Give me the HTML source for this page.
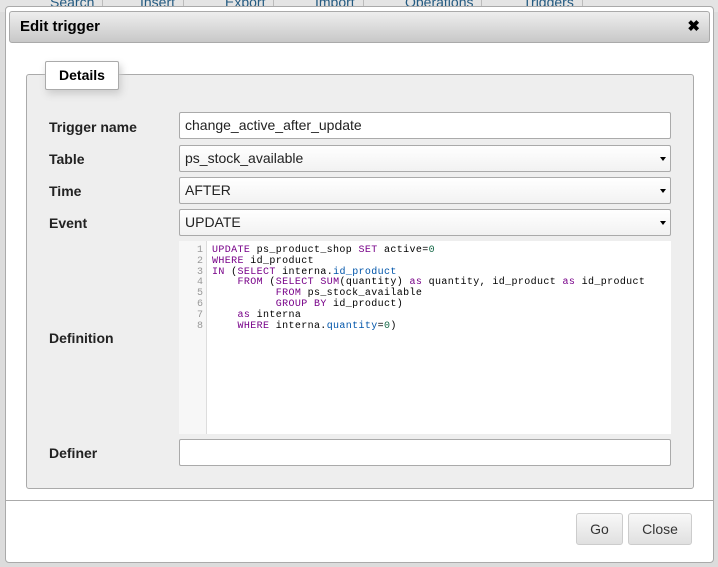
<!DOCTYPE html>
<html><head><style>
body{margin:0;width:718px;height:567px;background:#dcdcdc;font-family:"Liberation Sans",sans-serif;position:relative;overflow:hidden}
.top{position:absolute;left:0;top:0;width:718px;height:12px;background:#e4e4e4}
.tab{position:absolute;top:-6px;font-size:14px;color:#235a81;height:14px;border-right:1px solid #bbb;padding-right:8px}
.dlg{position:absolute;left:5px;top:6px;width:707px;height:555px;background:#fff;border:1px solid #aaa;border-radius:4px}
.title{position:absolute;left:3px;top:4px;width:699px;height:30px;border:1px solid #aaa;border-radius:3px;background:linear-gradient(#eee,#c8c8c8);font-weight:bold;font-size:15px;line-height:30px}
.title span{position:absolute;left:10px}
.title b{position:absolute;right:9px;font-size:15px}
.fs{position:absolute;left:20px;top:67px;width:666px;height:413px;background:#eee;border:1px solid #aaa;border-radius:3px}
.lg{position:absolute;left:39px;top:54px;width:72px;height:27px;background:#fff;border:1px solid #aaa;border-radius:2px;box-shadow:2px 4px 8px #ccc;font-weight:bold;font-size:14px;line-height:27px;text-align:center}
.lbl{position:absolute;left:43px;font-weight:bold;font-size:14px;color:#222}
.in{position:absolute;left:173px;border:1px solid #aaa;border-radius:2px;background:#fff;font-size:14px;line-height:25px;padding-left:5px;box-sizing:border-box;width:492px;height:27px;color:#222}
.sel{background:linear-gradient(#fff,#f2f2f2)}
.sel:after{content:"";position:absolute;right:4px;top:11px;border:3px solid transparent;border-top:4px solid #000}
.code{position:absolute;left:173px;top:234px;width:492px;height:193px;background:#fff;font-family:"Liberation Mono",monospace;font-size:10px;line-height:10.8px}
.gut{position:absolute;left:0;top:0;width:28px;height:193px;background:#f7f7f7;border-right:1px solid #ddd;color:#999;text-align:right;padding-top:5px;box-sizing:border-box;padding-right:3px}
.txt{position:absolute;left:33px;top:5px;white-space:pre;color:#000;letter-spacing:0.37px}
.k{color:#708}.n{color:#164}.v{color:#05a}
.sep{position:absolute;left:0;top:493px;width:707px;border-top:1px solid #aaa}
.btn{position:absolute;top:506px;height:30px;border:1px solid #ccc;border-radius:3px;background:linear-gradient(#f8f8f8,#e0e0e0);font-size:14px;line-height:30px;text-align:center;color:#333}
</style></head><body>
<div class="top">
<div class="tab" style="left:50px">Search</div>
<div class="tab" style="left:140px">Insert</div>
<div class="tab" style="left:225px">Export</div>
<div class="tab" style="left:315px">Import</div>
<div class="tab" style="left:405px">Operations</div>
<div class="tab" style="left:523px">Triggers</div>
</div>
<div class="dlg">
<div class="title"><span>Edit trigger</span><b>✖</b></div>
<div class="fs"></div>
<div class="lg">Details</div>
<div class="lbl" style="top:112px">Trigger name</div>
<div class="in" style="top:105px">change_active_after_update</div>
<div class="lbl" style="top:144px">Table</div>
<div class="in sel" style="top:138px">ps_stock_available</div>
<div class="lbl" style="top:176px">Time</div>
<div class="in sel" style="top:170px">AFTER</div>
<div class="lbl" style="top:208px">Event</div>
<div class="in sel" style="top:202px">UPDATE</div>
<div class="lbl" style="top:323px">Definition</div>
<div class="code"><div class="gut">1<br>2<br>3<br>4<br>5<br>6<br>7<br>8</div><div class="txt"><span class="k">UPDATE</span> ps_product_shop <span class="k">SET</span> active=<span class="n">0</span>
<span class="k">WHERE</span> id_product
<span class="k">IN</span> (<span class="k">SELECT</span> interna.<span class="v">id_product</span>
    <span class="k">FROM</span> (<span class="k">SELECT</span> <span class="k">SUM</span>(quantity) <span class="k">as</span> quantity, id_product <span class="k">as</span> id_product
          <span class="k">FROM</span> ps_stock_available
          <span class="k">GROUP BY</span> id_product)
    <span class="k">as</span> interna
    <span class="k">WHERE</span> interna.<span class="v">quantity</span>=<span class="n">0</span>)</div></div>
<div class="lbl" style="top:438px">Definer</div>
<div class="in" style="top:432px"></div>
<div class="sep"></div>
<div class="btn" style="left:570px;width:45px">Go</div>
<div class="btn" style="left:622px;width:62px">Close</div>
</div>
</body></html>
